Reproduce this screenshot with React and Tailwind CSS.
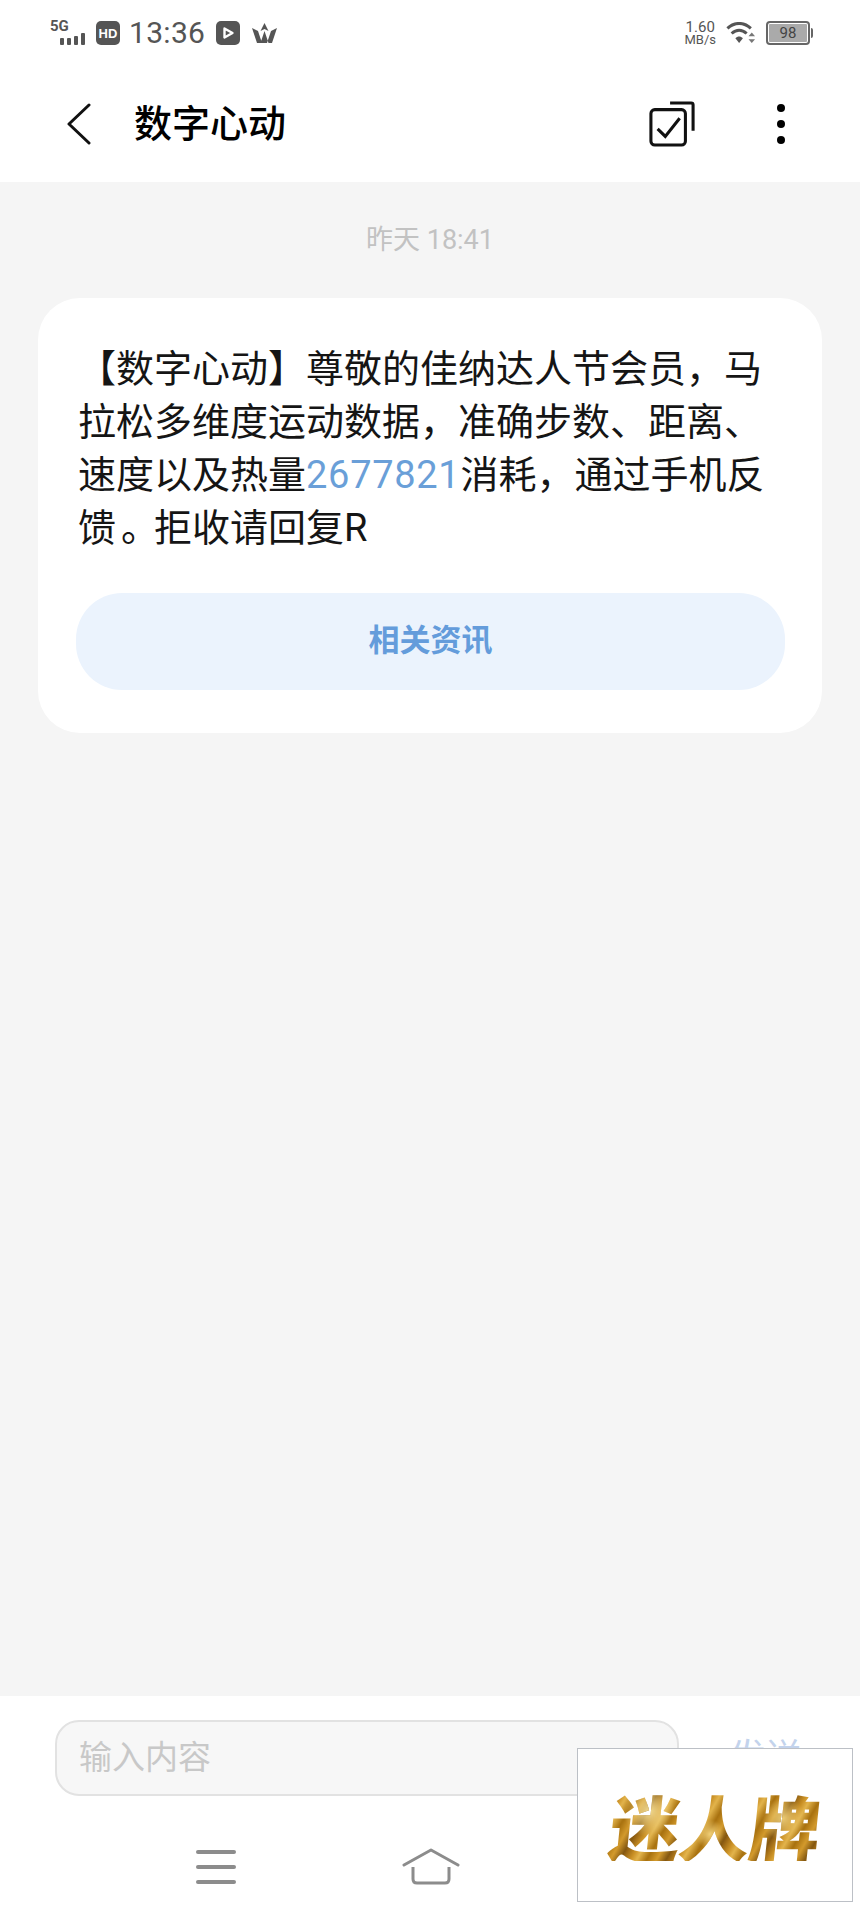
import React from "react";

const cjk = "font-['Roboto','Noto_Sans_CJK_SC',sans-serif]";

const StatusLeft = () => (
  <div className="flex items-center text-[#555]">
    <div className="relative w-[38px] h-[24px] mr-[8px]">
      <span className="absolute left-0 top-[-2px] font-['Roboto',sans-serif] text-[15px] leading-[15px] font-bold">5G</span>
      <div className="absolute left-[10px] bottom-0 flex items-end gap-[3px]">
        <div className="w-[4px] h-[7px] rounded-[1px] bg-[#555]" />
        <div className="w-[4px] h-[7px] rounded-[1px] bg-[#555]" />
        <div className="w-[4px] h-[9px] rounded-[1px] bg-[#555]" />
        <div className="w-[4px] h-[12px] rounded-[1px] bg-[#555]" />
      </div>
    </div>
    <div className="w-[24px] h-[24px] rounded-[5px] bg-[#555] flex items-center justify-center text-white font-['Liberation_Sans',sans-serif] text-[13px] font-bold leading-none">
      HD
    </div>
    <span className="ml-[9px] font-['Roboto',sans-serif] text-[30px] leading-none tracking-[0.3px] text-[#555]">13:36</span>
    <div className="ml-[11px] w-[24px] h-[24px] rounded-[5px] bg-[#555] flex items-center justify-center">
      <svg width="14" height="14" viewBox="0 0 14 14">
        <path d="M3.5 2.5 L11.5 7 L3.5 11.5 Z" fill="none" stroke="#fff" strokeWidth="2.4" strokeLinejoin="round" />
      </svg>
    </div>
    <svg className="ml-[12px]" width="25" height="21" viewBox="0 0 25 21">
      <path d="M12.5 0 L16.5 8 L12.5 6 L8.5 8 Z M0 5 L6 8 L10 20 L5 20 Z M25 5 L19 8 L15 20 L20 20 Z M12.5 8 L16.5 20 L8.5 20 Z" fill="#555" />
    </svg>
  </div>
);

const StatusRight = () => (
  <div className="flex items-center text-[#555]">
    <div className="flex flex-col items-center font-['Roboto',sans-serif] leading-none">
      <span className="text-[15px] leading-[12px]">1.60</span>
      <span className="text-[13px] leading-[13px]">MB/s</span>
    </div>
    <svg className="ml-[10px]" width="30" height="23" viewBox="0 0 32 24">
      <path d="M1.5 6.5 C9 -0.5 19 -0.5 26.5 6.5" fill="none" stroke="#555" strokeWidth="3.2" />
      <path d="M6 12 C11 7.5 17 7.5 22 12" fill="none" stroke="#555" strokeWidth="3.2" />
      <path d="M10 17 C12.5 14.5 15.5 14.5 18 17 L14 22 Z" fill="#555" />
      <path d="M27.5 11 L31 15 L24 15 Z M24 18 L31 18 L27.5 22 Z" fill="#777" />
    </svg>
    <div className="ml-[10px] flex items-center">
      <div className="w-[44px] h-[24px] rounded-[4px] border-2 border-[#666] p-[1px]">
        <div className="w-full h-full bg-[#aaa] rounded-[1px] flex items-center justify-center font-['Roboto',sans-serif] text-[15px] leading-none text-[#444]">
          98
        </div>
      </div>
      <div className="w-[2px] h-[10px] bg-[#666] rounded-r-[2px] ml-[1px]" />
    </div>
  </div>
);

const Header = () => (
  <div className="bg-white h-[182px] shrink-0 flex flex-col">
    <div className="flex items-center justify-between h-[66px] pl-[50px] pr-[47px]">
      <StatusLeft />
      <StatusRight />
    </div>
    <div className="flex items-center h-[116px]">
      <svg className="ml-[66px]" width="25" height="42" viewBox="0 0 25 42">
        <path d="M23 2 L3 21 L23 40" fill="none" stroke="#111" strokeWidth="3" strokeLinecap="round" strokeLinejoin="round" />
      </svg>
      <h1 className={`ml-[43px] text-[38px] leading-none font-medium text-black ${cjk}`}>数字心动</h1>
      <svg className="ml-auto" width="46" height="46" viewBox="0 0 48 48">
        <rect x="2" y="9" width="36" height="37" rx="4" fill="none" stroke="#111" strokeWidth="3.2" />
        <path d="M22 2 H44 Q46 2 46 4 V31" fill="none" stroke="#111" strokeWidth="3.2" />
        <path d="M9 29 L17 37 L32 18" fill="none" stroke="#111" strokeWidth="3.2" />
      </svg>
      <div className="ml-[82px] mr-[75px] flex flex-col gap-[8px] items-center">
        <div className="w-[8px] h-[8px] rounded-full bg-black" />
        <div className="w-[8px] h-[8px] rounded-full bg-black" />
        <div className="w-[8px] h-[8px] rounded-full bg-black" />
      </div>
    </div>
  </div>
);

const MessageCard = () => (
  <div className="mx-[38px] mt-[32px] h-[435px] bg-white rounded-[42px] pl-[40px] pt-[45px]">
    <div className={`text-[38px] leading-[53px] text-[#151515] whitespace-nowrap [text-spacing-trim:space-all] ${cjk}`}>
      <p>【数字心动】尊敬的佳纳达人节会员，马</p>
      <p>拉松多维度运动数据，准确步数、距离、</p>
      <p>
        速度以及热量<span className="text-[#6a9fd8] tracking-[0.7px]">2677821</span>消耗，通过手机反
      </p>
      <p>
        馈<span className="ml-[5px] mr-[-5px]">。</span>拒收请回复R
      </p>
    </div>
    <button className={`-ml-[2px] mt-[38px] w-[709px] h-[97px] rounded-[46px] bg-[#ebf3fd] text-[#649cdb] text-[31px] font-bold ${cjk}`}>
      相关资讯
    </button>
  </div>
);

const Watermark = () => (
  <div className="absolute left-[577px] top-[1748px] w-[276px] h-[154px] bg-white border border-[#bcc0c6] flex items-center justify-center">
    <span className="font-['Noto_Sans_CJK_SC',sans-serif] font-black text-[71px] leading-none tracking-[-1px] -skew-x-6 bg-[radial-gradient(circle_at_18%_30%,#f4dc92_0,#f4dc9200_14%),radial-gradient(circle_at_48%_62%,#f0cf78_0,#f0cf7800_12%),radial-gradient(circle_at_82%_40%,#eccb74_0,#eccb7400_12%),repeating-linear-gradient(115deg,#8a5a10_0,#c98f24_9px,#e3b44c_15px,#a8710f_24px,#d39a2c_33px,#7f5410_42px)] bg-clip-text text-transparent">
      迷人牌
    </span>
  </div>
);

const BottomBar = () => (
  <div className="bg-white h-[224px] shrink-0">
    <div className="flex items-start pt-[24px] pl-[55px]">
      <div className="w-[624px] h-[76px] rounded-[24px] border-2 border-[#e2e2e2] bg-[#f7f7f7] flex items-center pl-[22px]">
        <span className={`text-[33px] text-[#c8c8c8] ${cjk}`}>输入内容</span>
      </div>
      <span className={`ml-[51px] mt-[14px] text-[36px] leading-[48px] text-[#c3d3ec] ${cjk}`}>发送</span>
    </div>
    <div className="flex items-center mt-[52px] pl-[196px]">
      <div className="flex flex-col gap-[11px] w-[40px]">
        <div className="h-[4px] rounded-[2px] bg-[#8c8c8c]" />
        <div className="h-[4px] rounded-[2px] bg-[#8c8c8c]" />
        <div className="h-[4px] rounded-[2px] bg-[#8c8c8c]" />
      </div>
      <svg className="ml-[166px]" width="58" height="37" viewBox="0 0 58 37">
        <path d="M2 17 L29 2 L56 17" fill="none" stroke="#8c8c8c" strokeWidth="3" strokeLinejoin="round" strokeLinecap="round" />
        <path d="M11 19 V31 Q11 35 15 35 H43 Q47 35 47 31 V19" fill="none" stroke="#8c8c8c" strokeWidth="3" />
      </svg>
    </div>
  </div>
);

export default function App() {
  return (
    <div className="relative w-[860px] h-[1920px] overflow-hidden bg-[#f5f5f5] flex flex-col">
      <Header />
      <div className="flex-1">
        <div className={`text-center pt-[32px] text-[27px] leading-[52px] text-[#c2c2c2] ${cjk}`}>昨天 18:41</div>
        <MessageCard />
      </div>
      <BottomBar />
      <Watermark />
    </div>
  );
}
